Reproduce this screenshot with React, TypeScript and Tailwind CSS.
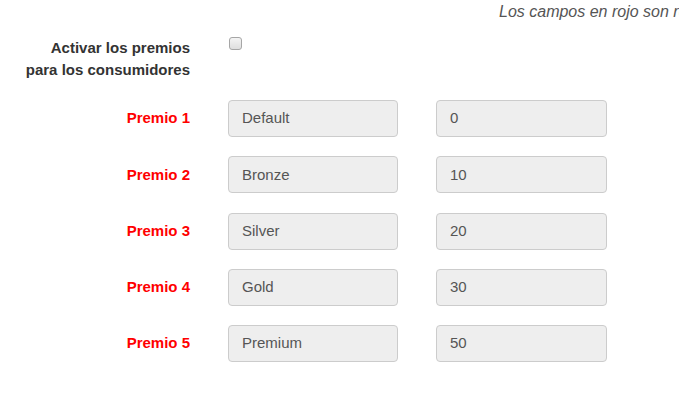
import React from "react";

const rows = [
  ["Premio 1", "Default", "0"],
  ["Premio 2", "Bronze", "10"],
  ["Premio 3", "Silver", "20"],
  ["Premio 4", "Gold", "30"],
  ["Premio 5", "Premium", "50"],
];

export default function App() {
  return (
    <div
      className="w-[679px] h-[410px] overflow-hidden bg-white text-[15px] text-[#333]"
      style={{ fontFamily: '"Liberation Sans", Arial, sans-serif' }}
    >
      <div className="pl-[499px] pt-[1px] h-[30px] whitespace-nowrap italic text-[16px] leading-[22px] text-[#555]">
        Los campos en rojo son requeridos
      </div>
      <div className="flex pt-[7px]">
        <div className="w-[190px] text-right font-bold leading-[22px] text-[#333]">
          Activar los premios
          <br />
          para los consumidores
        </div>
        <div className="ml-[39px] pt-0">
          <div className="w-[13px] h-[13px] rounded-[3px] border border-[#a6a6a6] bg-gradient-to-b from-[#f4f4f4] to-[#dedede]" />
        </div>
      </div>
      <div className="flex flex-col gap-[19.25px] pt-[19px]">
        {rows.map(([label, name, value]) => (
          <div key={label} className="flex items-center">
            <div className="w-[190px] text-right font-bold text-[#ff0000]">{label}</div>
            <div className="ml-[38px] w-[170px] h-[37px] rounded-[4px] border border-[#cccccc] bg-[#eeeeee] px-[13px] flex items-center text-[#555]">
              {name}
            </div>
            <div className="ml-[38px] w-[171px] h-[37px] rounded-[4px] border border-[#cccccc] bg-[#eeeeee] px-[13px] flex items-center text-[#555]">
              {value}
            </div>
          </div>
        ))}
      </div>
    </div>
  );
}
